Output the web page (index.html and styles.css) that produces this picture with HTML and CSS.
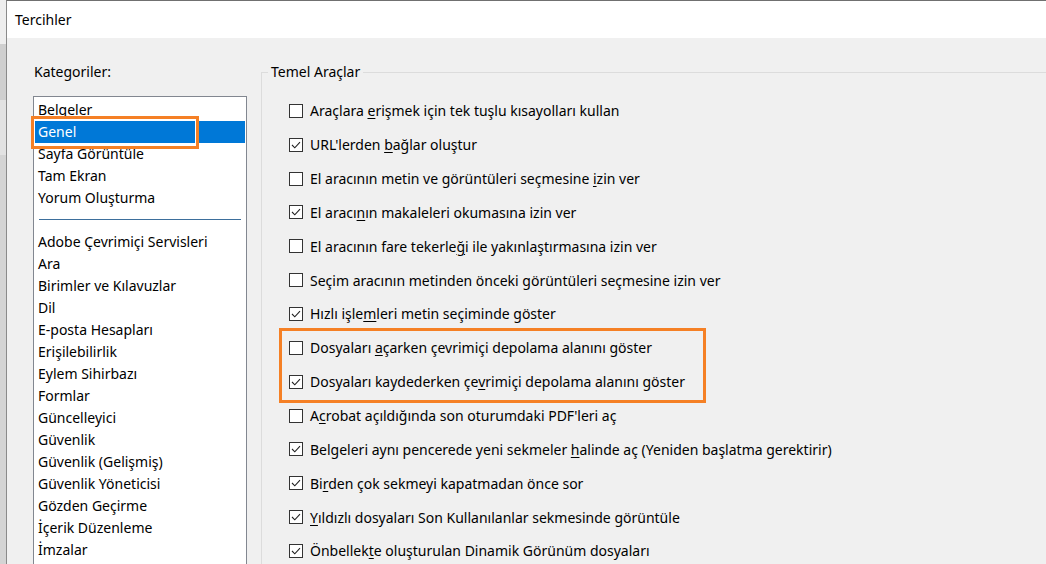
FILE: index.html
```html
<!DOCTYPE html>
<html lang="tr">
<head>
<meta charset="utf-8">
<title>Tercihler</title>
<link rel="stylesheet" href="styles.css">
</head>
<body>
<div class="screen">
  <div class="behind"></div>
  <div class="dialog">
    <div class="titlebar">Tercihler</div>
    <div class="content">
      <div class="categories">
        <div class="cat-label">Kategoriler:</div>
        <div class="listbox">
          <div class="item">Belgeler</div>
          <div class="item selected">Genel</div>
          <div class="item">Sayfa Görüntüle</div>
          <div class="item">Tam Ekran</div>
          <div class="item">Yorum Oluşturma</div>
          <div class="sep"></div>
          <div class="item">Adobe Çevrimiçi Servisleri</div>
          <div class="item">Ara</div>
          <div class="item">Birimler ve Kılavuzlar</div>
          <div class="item">Dil</div>
          <div class="item">E-posta Hesapları</div>
          <div class="item">Erişilebilirlik</div>
          <div class="item">Eylem Sihirbazı</div>
          <div class="item">Formlar</div>
          <div class="item">Güncelleyici</div>
          <div class="item">Güvenlik</div>
          <div class="item">Güvenlik (Gelişmiş)</div>
          <div class="item">Güvenlik Yöneticisi</div>
          <div class="item">Gözden Geçirme</div>
          <div class="item">İçerik Düzenleme</div>
          <div class="item">İmzalar</div>
        </div>
      </div>
      <fieldset class="group">
        <legend>Temel Araçlar</legend>
        <div class="row"><span class="cb"></span><span>Araçlara <u>e</u>rişmek için tek tuşlu kısayolları kullan</span></div>
        <div class="row"><span class="cb checked"><svg viewBox="0 0 12 12"><path d="M2 6 L4.8 8.8 L10 3.2"/></svg></span><span>URL'lerden <u>b</u>ağlar oluştur</span></div>
        <div class="row"><span class="cb"></span><span>El aracının metin ve görüntüleri seçmesine <u>i</u>zin ver</span></div>
        <div class="row"><span class="cb checked"><svg viewBox="0 0 12 12"><path d="M2 6 L4.8 8.8 L10 3.2"/></svg></span><span>El aracı<u>n</u>ın makaleleri okumasına izin ver</span></div>
        <div class="row"><span class="cb"></span><span>El aracının fare tekerle<u>ğ</u>i ile yakınlaştırmasına izin ver</span></div>
        <div class="row"><span class="cb"></span><span>Seçim aracının metinden önceki görüntüleri seçmesine izin ver</span></div>
        <div class="row"><span class="cb checked"><svg viewBox="0 0 12 12"><path d="M2 6 L4.8 8.8 L10 3.2"/></svg></span><span>Hızlı işle<u>m</u>leri metin seçiminde göster</span></div>
        <div class="highlight">
          <div class="row"><span class="cb"></span><span>Dosyaları <u>a</u>çarken çevrimiçi depolama alanını göster</span></div>
          <div class="row"><span class="cb checked"><svg viewBox="0 0 12 12"><path d="M2 6 L4.8 8.8 L10 3.2"/></svg></span><span>Dosyaları kaydederken çe<u>v</u>rimiçi depolama alanını göster</span></div>
        </div>
        <div class="row"><span class="cb"></span><span>A<u>c</u>robat açıldığında son oturumdaki PDF'leri aç</span></div>
        <div class="row"><span class="cb checked"><svg viewBox="0 0 12 12"><path d="M2 6 L4.8 8.8 L10 3.2"/></svg></span><span>Belgeleri aynı pencerede yeni sekmeler <u>h</u>alinde aç (Yeniden başlatma gerektirir)</span></div>
        <div class="row"><span class="cb checked"><svg viewBox="0 0 12 12"><path d="M2 6 L4.8 8.8 L10 3.2"/></svg></span><span>Bi<u>r</u>den çok sekmeyi kapatmadan önce sor</span></div>
        <div class="row"><span class="cb checked"><svg viewBox="0 0 12 12"><path d="M2 6 L4.8 8.8 L10 3.2"/></svg></span><span><u>Y</u>ıldızlı dosyaları Son Kullanılanlar sekmesinde görüntüle</span></div>
        <div class="row"><span class="cb checked"><svg viewBox="0 0 12 12"><path d="M2 6 L4.8 8.8 L10 3.2"/></svg></span><span>Önbellek<u>t</u>e oluşturulan Dinamik Görünüm dosyaları</span></div>
      </fieldset>
    </div>
  </div>
</div>
</body>
</html>
```

FILE: styles.css
```css
html, body {
  margin: 0;
  padding: 0;
  overflow: hidden;
}
body {
  width: 1046px;
  height: 564px;
  font-family: "Noto Sans", "Open Sans", sans-serif;
  font-size: 14px;
  color: #000;
  background: #d6d6d6;
}
.screen {
  display: flex;
  height: 564px;
}
.behind {
  width: 6px;
  flex: none;
  background: linear-gradient(#eeeeee 0 44px, #cfcfcf 44px 100px, #e2e2e2 100px 155px, #d4d4d4 155px);
}
.dialog {
  flex: 1;
  display: flex;
  flex-direction: column;
  border-left: 1px solid #8a8a8a;
  border-top: 1px solid #707070;
  min-width: 0;
}
.titlebar {
  height: 37px;
  background: #fff;
  padding-left: 8px;
  line-height: 37px;
  font-size: 14px;
}
.content {
  flex: 1;
  background: #f0f0f0;
  display: flex;
  min-height: 0;
}
.categories {
  width: 214px;
  margin-left: 26px;
  flex: none;
}
.cat-label {
  margin-top: 24px;
  height: 20px;
  line-height: 20px;
  padding-left: 1px;
}
.listbox {
  margin-top: 14px;
  background: #fff;
  border: 1px solid #828790;
  border-bottom: none;
  padding: 2px 1px 0;
  height: 600px;
}
.item {
  height: 22px;
  line-height: 22px;
  padding-left: 3px;
  white-space: nowrap;
}
.item.selected {
  background: #0078d7;
  color: #fff;
  position: relative;
}
.item.selected::after {
  content: "";
  position: absolute;
  left: -4px;
  top: -5px;
  width: 162px;
  height: 27px;
  border: 3px solid #f58025;
  box-shadow: inset 0 0 0 1px #fff;
}
.sep {
  height: 22px;
  margin: 0 4px 0 4px;
  background: linear-gradient(transparent 10px, #3d6f9c 10px 11px, transparent 11px);
}
.group {
  margin: 24px 0 0 14px;
  padding: 12px 0 0 27px;
  border: 1px solid #dcdcdc;
  border-right: none;
  border-bottom: none;
  flex: 1;
  min-width: 0;
}
.group legend {
  margin-left: -21px;
  padding: 0 3px;
  line-height: 20px;
}
.row {
  height: 33.85px;
  display: flex;
  align-items: center;
  white-space: nowrap;
}
.cb {
  width: 14px;
  height: 14px;
  box-sizing: border-box;
  border: 1px solid #333;
  background: #fff;
  margin-right: 7px;
  flex: none;
  display: flex;
}
.cb svg {
  width: 12px;
  height: 12px;
}
.cb svg path {
  fill: none;
  stroke: #222;
  stroke-width: 1.1;
}
u {
  text-decoration-thickness: 1px;
  text-underline-offset: 2px;
}
.highlight {
  position: relative;
}
.highlight::after {
  content: "";
  position: absolute;
  left: -10px;
  top: -3px;
  width: 421px;
  height: 69px;
  border: 3px solid #f58025;
  pointer-events: none;
}
```
